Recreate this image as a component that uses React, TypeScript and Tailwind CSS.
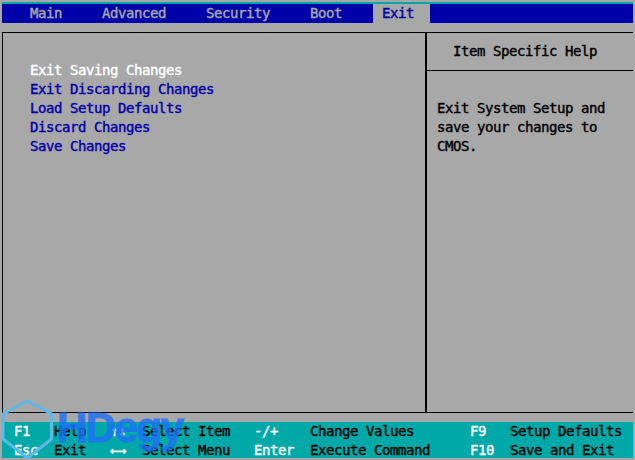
const rows = [
  ["F1", "Help", "↑↓", "Select Item", "-/+", "Change Values", "F9", "Setup Defaults"],
  ["Esc", "Exit", "←→", "Select Menu", "Enter", "Execute Command", "F10", "Save and Exit"],
];
const menu = ["Exit Saving Changes", "Exit Discarding Changes", "Load Setup Defaults", "Discard Changes", "Save Changes"];
const tabs = [
  { t: "Main", w: "w-[72px]" },
  { t: "Advanced", w: "w-[104px]" },
  { t: "Security", w: "w-[104px]" },
  { t: "Boot", w: "w-[71px]" },
];
const widths = ["w-[40px]", "w-[56px]", "w-[32px]", "w-[112px]", "w-[56px]", "w-[160px]", "w-[40px]", "w-[120px]"];

export default function App() {
  return (
    <div className="relative w-[635px] h-[460px] overflow-hidden bg-[#a8a8a8] p-[2px] font-['DejaVu_Sans_Mono',monospace] text-[14px] tracking-[-0.43px] leading-[19px] [-webkit-text-stroke:0.4px] flex flex-col">
      <div className="h-[2px] bg-[#00a8a8]" />
      <div className="h-[19px] bg-[#0000a8] flex pl-[20px] text-[#a8a8a8]">
        {tabs.map((x) => (
          <div key={x.t} className={`${x.w} pl-[8px]`}>{x.t}</div>
        ))}
        <div className="w-[57px] pl-[9px] bg-[#a8a8a8] text-[#0000a8]">Exit</div>
      </div>
      <div className="mt-[9px] h-[381px] flex border-t border-b border-l border-black">
        <div className="w-[424px] pl-[27px] pt-[28px] text-[#0000a8] border-r-2 border-black">
          {menu.map((m, i) => (
            <div key={m} className={i === 0 ? "text-white" : ""}>{m}</div>
          ))}
        </div>
        <div className="flex-1 text-black">
          <div className="h-[38px] border-b border-black pl-[26px] pt-[9px]">Item Specific Help</div>
          <div className="pl-[10px] pt-[28px]">
            <div>Exit System Setup and</div>
            <div>save your changes to</div>
            <div>CMOS.</div>
          </div>
        </div>
      </div>
      <div className="mt-[9px] h-[36px] bg-[#00a8a8] pl-[12px]">
        {rows.map((r) => (
          <div key={r[0]} className="flex h-[19px]">
            {r.map((c, i) => (
              <div key={i} className={`${widths[i]} whitespace-pre ${i % 2 === 0 ? "text-white" : "text-black"}`}>{c}</div>
            ))}
          </div>
        ))}
      </div>
      <svg className="absolute left-0 top-[396px]" width="56" height="64" viewBox="0 0 56 64" fill="none">
        <path d="M27.5 5 L51.5 18 V43 L27.5 62 L3 43 V18 Z" stroke="#5fb9e6" strokeWidth="3" />
      </svg>
      <div className="absolute left-[57px] top-[404px] font-['Liberation_Sans',sans-serif] text-[42px] leading-[48px] font-bold tracking-[-1.5px] [-webkit-text-stroke:1px_#1f6ff5] text-[#1f6ff5] opacity-80">HDegy</div>
    </div>
  );
}
